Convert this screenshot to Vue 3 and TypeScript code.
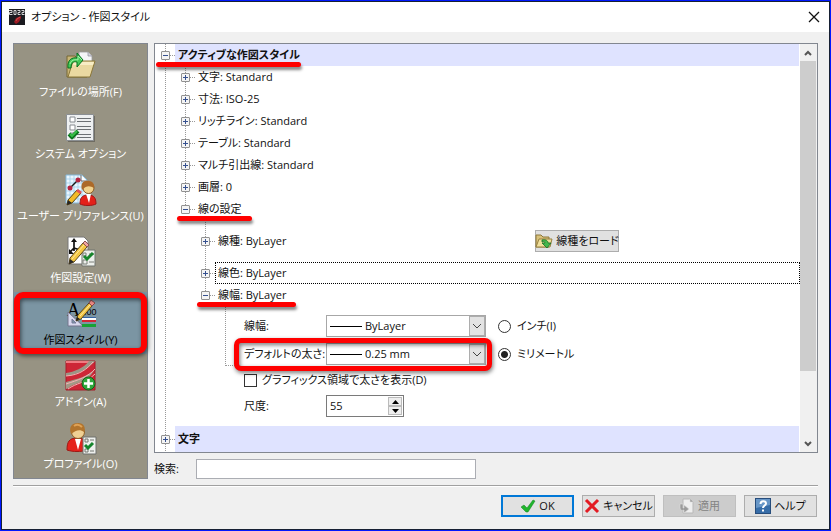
<script setup lang="ts">
import { ref } from 'vue'

type IconName = 'folder' | 'system' | 'user' | 'drafting' | 'style' | 'addin' | 'profile'

interface Page {
  icon: IconName
  label: string
}

const pages: Page[] = [
  { icon: 'folder', label: 'ファイルの場所(F)' },
  { icon: 'system', label: 'システム オプション' },
  { icon: 'user', label: 'ユーザー プリファレンス(U)' },
  { icon: 'drafting', label: '作図設定(W)' },
  { icon: 'style', label: '作図スタイル(Y)' },
  { icon: 'addin', label: 'アドイン(A)' },
  { icon: 'profile', label: 'プロファイル(O)' },
]

const styles: string[] = [
  '文字: Standard',
  '寸法: ISO-25',
  'リッチライン: Standard',
  'テーブル: Standard',
  'マルチ引出線: Standard',
  '画層: 0',
]

const current = ref<IconName>('style')
const lineWeight = ref('ByLayer')
const defaultWeight = ref('0.25 mm')
const unit = ref('mm')
const showWeight = ref(false)
const scale = ref('55')
const query = ref('')

function step(by: number): void {
  scale.value = String(Number(scale.value) + by)
}
</script>

<template>
  <div class="dialog">
    <header class="titlebar">
      <svg class="app-icon" width="16" height="16" viewBox="0 0 16 16">
        <rect width="16" height="16" fill="#1b1b20" />
        <path d="M0 1.500h3v2H.500v2H3.500M5 1.500h2v4H5zM8.500 1.500h2.500v2H9v2h2.500M12.500 1.500h2.500v2h-2v2h2.500" fill="none" stroke="#e8e8e8" stroke-width=".9" />
        <path d="M12 7 7 9l-2 4 2 2 3-2 2-4z" fill="#9c1c24" />
        <path d="m11 8-3 2-1 2" fill="none" stroke="#d44b4b" />
      </svg>
      <h1>オプション - 作図スタイル</h1>
      <button class="close" type="button" aria-label="閉じる">
        <svg width="12" height="12" viewBox="0 0 12 12"><path d="m1 1 10 10M11 1 1 11" stroke="#111" stroke-width="1.300" /></svg>
      </button>
    </header>

    <main class="body">
      <nav class="sidebar">
        <button
          v-for="page in pages"
          :key="page.icon"
          type="button"
          class="page"
          :class="{ active: page.icon === current }"
          @click="current = page.icon"
        >
          <svg width="32" height="32" viewBox="0 0 32 32">
            <g v-if="page.icon === 'folder'">
              <path d="M2 6h8l2 2h10v19H2z" fill="#c9b577" stroke="#756632" />
              <path d="M14 2h9l4 4v10H14z" fill="#f5f5f8" stroke="#999" stroke-width=".8" />
              <path d="M23 2v4h4" fill="#d5d5df" stroke="#8d8d99" stroke-width=".7" />
              <path d="M8 11h22l-5 16H3z" fill="#ead9a1" stroke="#8a7638" />
              <path d="M9 12h20l-1 3H8z" fill="#f8edc5" />
              <path d="M3 18C2 10 7 7 12 8V3l6 7-6 7v-5c-4-1-6 1-6 6z" fill="#45c957" stroke="#087020" />
              <path d="M5 14c1-4 5-5 8-4V6l4 4" fill="none" stroke="#a0f3a7" />
            </g>
            <g v-else-if="page.icon === 'system'">
              <path d="M3 4h27v26H3z" fill="#6f6c62" />
              <path d="M1.500 2.500h27v26h-27z" fill="#eef0f1" stroke="#8b8f93" />
              <path d="M5 5h5v5H5zM5 13h5v5H5zM5 21h5v5H5z" fill="#fff" stroke="#868b90" />
              <path d="M12 6.500h14M12 9.500h14M12 14.500h14M12 17.500h14M12 22.500h14M12 25.500h14" stroke="#6c7074" />
              <path d="m4 22 3 3 6-6" fill="none" stroke="#08751b" stroke-width="4" />
              <path d="m5 22 2 2 5-5" fill="none" stroke="#38bd48" stroke-width="2" />
            </g>
            <g v-else-if="page.icon === 'user'">
              <path d="M1 1h16l5 5v23H1z" fill="#e9f6ff" stroke="#83b7d8" />
              <path d="M5 1v28M9 1v28M13 1v28M17 1v28M1 5h20M1 9h20M1 13h20M1 17h20M1 21h20M1 25h20" stroke="#98c9e7" stroke-width=".7" />
              <path d="M16 1v6h6" fill="#fff" stroke="#666" />
              <path d="m5 14 8-8" stroke="#181818" stroke-width="1.500" />
              <circle cx="5" cy="14" r="2.500" fill="#b52440" /><circle cx="13" cy="6" r="2.500" fill="#b52440" />
              <path d="M15 30c0-6 2-9 8-9s8 3 8 9c-4 2-12 2-16 0" fill="#e32119" stroke="#9c1818" />
              <path d="m21 20 3 9 2-9" fill="#fff" />
              <circle cx="23.500" cy="14" r="5.500" fill="#f2d28c" stroke="#8d5d25" />
              <path d="M17 16c-2-7 2-10 7-9 4 0 6 4 5 7-4-2-7-3-12 2" fill="#ac6928" />
              <path d="m3 26 9-10 4 3-9 10-5 2z" fill="#f2bb29" stroke="#5b4716" />
              <path d="m11 17 2-2 4 3-2 2z" fill="#e15257" /><path d="m3 26 4 3-5 2z" fill="#252525" />
            </g>
            <g v-else-if="page.icon === 'drafting'">
              <path d="M3 1h16l4 4v23H3z" fill="#fff" stroke="#777" />
              <path d="M9 15V5M9 12l9 3M9 12l-4 4" fill="none" stroke="#111" stroke-width="1.700" />
              <path d="m6 6 3-4 3 4zM16 12l4 4-6 1zM4 13v5h5z" fill="#111" />
              <path d="M17 14h13v16H17z" fill="#ecefeb" stroke="#71746e" />
              <path d="M18 24h4v4h-4zM24 26h5M18 17h3v3h-3zM24 18h5" fill="none" stroke="#7b7e79" />
              <path d="m19 20 3 3 6-6" fill="none" stroke="#16852b" stroke-width="3" />
              <path d="m5 22 13-15 4 4L9 26l-5 2z" fill="#f4c742" stroke="#5c4717" />
              <path d="m18 7 2-2 4 4-2 2z" fill="#f1a6a3" stroke="#8b5353" /><path d="m5 23 4 3-5 2z" fill="#282828" />
              <path d="m7 23 12-14" stroke="#ffe99c" />
            </g>
            <g v-else-if="page.icon === 'style'">
              <text x="2" y="18" class="icon-letter">A</text>
              <text x="19" y="17" class="icon-digits">.00</text>
              <path d="M3 14v14h15z" fill="#d8d8ed" stroke="#74758d" /><path d="M7 21v4h4z" fill="#7b95a3" stroke="#777b9b" />
              <path d="M17 19h14v3H17z" fill="#3464a5" /><path d="M17 20h14v3H17z" fill="#fff" /><path d="M17 22h14v2H17z" fill="#d62435" />
              <path d="M17 26h14v3H17z" fill="#18a235" />
              <path d="m13 17 11-12 3 3-11 13-5 2z" fill="#f0c442" stroke="#594719" />
              <path d="m24 5 2-3 4 3-3 3z" fill="#f08b86" stroke="#884a4a" /><path d="m12 19 3 2-4 2z" fill="#222" />
              <path d="M15 18 25 7" stroke="#ffeaa0" />
            </g>
            <g v-else-if="page.icon === 'addin'">
              <path d="M1 1h29v29H1z" fill="#cd2636" stroke="#a41c2a" />
              <path d="M1 1h28v2H1z" fill="#ef7b82" />
              <path d="M1 16C12 15 23 9 30 1h-6C19 8 9 12 1 13z" fill="#9c9686" />
              <path d="M1 22c10-3 22-5 29-13-7 11-9 11-19 15S7 27 1 29z" fill="#a39986" />
              <path d="M1 16C15 15 22 9 28 2M1 24c12-4 22-7 29-15M3 29c8-6 18-6 27-15" fill="none" stroke="#f3b3b5" />
              <circle cx="23.500" cy="23.500" r="6.500" fill="#2fa83b" stroke="#12641b" />
              <path d="M23.500 19v9M19 23.500h9" stroke="#fff" stroke-width="2.500" />
            </g>
            <g v-else>
              <path d="M2 28c0-8 2-12 10-12s10 4 10 12c-6 2-14 2-20 0" fill="#e5231c" stroke="#9d1914" />
              <path d="m10 17 3 11 3-11z" fill="#fff" />
              <circle cx="13" cy="10" r="6.500" fill="#efd094" stroke="#8f6127" />
              <path d="M6 12C3 4 8 1 13 1c6 0 8 5 6 9-4-3-8-2-13 2" fill="#b1742d" />
              <path d="M9 4c3-2 6-1 8 1" stroke="#dfa255" fill="none" stroke-width="2" />
              <path d="M18 15h13v17H18z" fill="#eef0ed" stroke="#6f716d" />
              <path d="M20 17h3v3h-3zM20 27h3v3h-3zM25 18h4M25 29h4" fill="none" stroke="#727671" />
              <path d="m20 23 3 3 5-5" fill="none" stroke="#15852d" stroke-width="3" />
            </g>
          </svg>
          <span>{{ page.label }}</span>
        </button>
      </nav>

      <section class="content">
        <div class="panel">
          <div class="tree">
            <div class="row heading marked">
              <span class="node"><button type="button" class="toggle minus" aria-label="折りたたむ"></button></span>
              <strong>アクティブな作図スタイル</strong>
            </div>
            <div v-for="item in styles" :key="item" class="row level-1">
              <span class="node line"><button type="button" class="toggle" aria-label="展開"></button></span>
              <span class="name">{{ item }}</span>
            </div>
            <div class="row level-1">
              <span class="node line end"><button type="button" class="toggle minus" aria-label="折りたたむ"></button></span>
              <span class="name marked">線の設定</span>
            </div>
            <div class="row level-2 tall">
              <span class="node line"><button type="button" class="toggle" aria-label="展開"></button></span>
              <span class="name">線種: ByLayer</span>
              <button type="button" class="button load">
                <svg width="18" height="16" viewBox="0 0 18 16">
                  <path d="M1 2h5l2 2h6v10H1z" fill="#d8c17b" stroke="#8d783a" />
                  <path d="M4 6h13l-2 8H1z" fill="#f1df9b" stroke="#978141" />
                  <path d="M7 7c4-1 6 1 6 3h3l-4 5-5-5h3c0-1-1-2-3-1z" fill="#45b84c" stroke="#176d24" stroke-width=".8" />
                </svg>
                <span>線種をロード</span>
              </button>
            </div>
            <div class="row level-2">
              <span class="node line"><button type="button" class="toggle" aria-label="展開"></button></span>
              <span class="name focused">線色: ByLayer</span>
            </div>
            <div class="row level-2">
              <span class="node line end"><button type="button" class="toggle minus" aria-label="折りたたむ"></button></span>
              <span class="name marked">線幅: ByLayer</span>
            </div>
            <div class="settings">
              <label for="weight">線幅:</label>
              <div class="combo">
                <select id="weight" v-model="lineWeight"><option>ByLayer</option></select>
                <svg width="16" height="20" viewBox="0 0 16 20"><path d="m4 8 4 4 4-4" fill="none" stroke="#444" /></svg>
              </div>
              <label class="radio"><input v-model="unit" type="radio" name="unit" value="inch" />インチ(I)</label>

              <label for="default-weight">デフォルトの太さ:</label>
              <div class="combo">
                <select id="default-weight" v-model="defaultWeight"><option>0.25 mm</option></select>
                <svg width="16" height="20" viewBox="0 0 16 20"><path d="m4 8 4 4 4-4" fill="none" stroke="#444" /></svg>
              </div>
              <label class="radio"><input v-model="unit" type="radio" name="unit" value="mm" />ミリメートル</label>

              <label class="check"><input v-model="showWeight" type="checkbox" />グラフィックス領域で太さを表示(D)</label>

              <label for="scale">尺度:</label>
              <div class="spinner">
                <input id="scale" v-model="scale" type="text" />
                <span class="steps">
                  <button type="button" aria-label="増やす" @click="step(1)"><svg width="7" height="4" viewBox="0 0 7 4"><path d="M0 4h7L3.500 0z" /></svg></button>
                  <button type="button" aria-label="減らす" @click="step(-1)"><svg width="7" height="4" viewBox="0 0 7 4"><path d="M0 0h7L3.500 4z" /></svg></button>
                </span>
              </div>
            </div>
            <div class="row heading last">
              <span class="node"><button type="button" class="toggle" aria-label="展開"></button></span>
              <strong>文字</strong>
            </div>
          </div>
          <div class="scrollbar">
            <button type="button" aria-label="上へ"><svg width="8" height="6" viewBox="0 0 8 6"><path d="m1 5 3-3 3 3" /></svg></button>
            <div class="track"><div class="thumb"></div></div>
            <button type="button" aria-label="下へ"><svg width="8" height="6" viewBox="0 0 8 6"><path d="m1 1 3 3 3-3" /></svg></button>
          </div>
        </div>
        <div class="search">
          <label for="search">検索:</label>
          <input id="search" v-model="query" type="text" />
        </div>
      </section>
    </main>

    <footer class="actions">
      <button type="button" class="button primary">
        <svg width="16" height="14" viewBox="0 0 16 14"><path d="m1 8 3-2 3 3 6-8 2 1-7 11H6z" fill="#20b52c" stroke="#118020" stroke-width=".5" /></svg>
        <span>OK</span>
      </button>
      <button type="button" class="button">
        <svg width="16" height="16" viewBox="0 0 16 16"><path d="m2 2 12 12M14 2 2 14" stroke="#e31b23" stroke-width="3" /></svg>
        <span>キャンセル</span>
      </button>
      <button type="button" class="button" disabled>
        <svg width="16" height="16" viewBox="0 0 16 16">
          <path d="M4 1h7l3 3v11H4z" fill="#eee" stroke="#b8b8b8" />
          <path d="M11 1v3h3M1 6v4c0 2 2 3 4 2v3l5-4-5-4v3H4V6z" fill="#9b9b9b" stroke="#ddd" stroke-width=".6" />
        </svg>
        <span>適用</span>
      </button>
      <button type="button" class="button">
        <svg width="16" height="16" viewBox="0 0 16 16">
          <rect x=".5" y=".5" width="15" height="15" fill="#376da8" stroke="#274d7c" />
          <path d="M1 1h14v6L1 10z" fill="#6796c7" />
          <path d="M5.500 6c0-4 5.500-3.500 5.500-.5C11 7.500 8 7.500 8 10" fill="none" stroke="#fff" stroke-width="2" /><path d="M7 11.500h2v2H7z" fill="#fff" />
        </svg>
        <span>ヘルプ</span>
      </button>
    </footer>
  </div>
</template>

<style>
body {
  margin: 0;
}
</style>

<style scoped>
*,
*::before,
*::after {
  box-sizing: border-box;
}

.dialog {
  display: flex;
  flex-direction: column;
  min-height: 100vh;
  border: 1px solid #0018ff;
  outline: 1px solid #172033;
  outline-offset: -2px;
  background: #f0f0f0;
  color: #111;
  font: 11px/16px "Open Sans", "Noto Sans CJK JP", sans-serif;
  font-feature-settings: "palt";
}

button,
input,
select {
  margin: 0;
  padding: 0;
  border: 0;
  border-radius: 0;
  background: none;
  color: inherit;
  font: inherit;
  font-feature-settings: inherit;
}

svg {
  display: block;
  flex: none;
}

.titlebar {
  display: flex;
  align-items: center;
  gap: 6px;
  height: 31px;
  padding: 0 8px;
  background: #fff;
}

h1 {
  flex: 1;
  margin: 0;
  font-size: 11px;
  font-weight: 400;
}

.close {
  padding: 2px;
}

.body {
  display: flex;
  flex: 1;
  gap: 6px;
  margin: 0 12px;
  padding: 11px 0 6px;
  border-bottom: 1px solid #a0a0a0;
  box-shadow: 0 1px #fff;
}

.sidebar {
  display: flex;
  flex-direction: column;
  width: 135px;
  border: 1px solid #828790;
  background: #979383;
}

.page {
  position: relative;
  display: flex;
  flex-direction: column;
  align-items: center;
  gap: 2px;
  height: 62px;
  padding: 6px 0;
  color: #fff;
}

.page svg {
  overflow: visible;
}

.page.active {
  background: #7b95a3;
  color: #000;
}

.page.active::after {
  content: "";
  position: absolute;
  inset: 0;
  border: 6px solid #f00;
  border-radius: 9px;
  filter: drop-shadow(1px 2px 2px #0008);
}

.icon-letter {
  font: 18px "Liberation Serif", serif;
}

.icon-digits {
  font: 9px "Liberation Sans", sans-serif;
}

.content {
  display: flex;
  flex: 1;
  flex-direction: column;
  min-width: 0;
}

.panel {
  display: flex;
  flex: 1;
  border: 1px solid #828790;
  background: #fff;
}

.tree {
  display: flex;
  flex: 1;
  flex-direction: column;
  min-width: 0;
  background: linear-gradient(#999 1px, transparent 1px) 10px 0 / 1px 2px repeat-y;
}

.row {
  display: flex;
  height: 22px;
}

.level-1 {
  padding-left: 20px;
}

.level-2 {
  padding-left: 40px;
}

.tall {
  height: 42px;
}

.node {
  position: relative;
  display: flex;
  flex: none;
  align-items: center;
  justify-content: center;
  width: 20px;
}

.node::after {
  content: "";
  position: absolute;
  top: 50%;
  right: 0;
  width: 5px;
  border-top: 1px dotted #999;
}

.line::before {
  content: "";
  position: absolute;
  top: 0;
  bottom: 0;
  left: 10px;
  width: 1px;
  background: linear-gradient(#999 1px, transparent 1px) 0 0 / 1px 2px;
}

.line.end::before {
  bottom: 50%;
}

.toggle {
  position: relative;
  width: 9px;
  height: 9px;
  border: 1px solid #919191;
  border-radius: 1px;
  background:
    linear-gradient(#35508f, #35508f) center / 5px 1px no-repeat,
    linear-gradient(#35508f, #35508f) center / 1px 5px no-repeat,
    #f4f4f4;
}

.toggle.minus {
  background: linear-gradient(#35508f, #35508f) center / 5px 1px no-repeat, #f4f4f4;
}

.name,
strong {
  display: flex;
  align-items: center;
  padding: 0 3px;
}

.name {
  position: relative;
}

.heading {
  position: relative;
}

.heading strong {
  flex: 1;
  margin-right: 1px;
  background: #dfe3ff;
}

.heading.last {
  flex: 1 0 24px;
}

.focused {
  flex: 1;
  padding: 0 2px;
  border: 1px dotted #000;
}

.marked::after {
  content: "";
  position: absolute;
  z-index: 1;
  right: -7px;
  bottom: -1px;
  left: -18px;
  height: 5px;
  border-radius: 3px;
  background: #f00;
  box-shadow: 1px 3px 3px #0007;
}

.heading.marked::after {
  right: auto;
  left: 1px;
  width: 145px;
}

.button {
  display: flex;
  align-items: center;
  justify-content: center;
  gap: 3px;
  width: 73px;
  height: 22px;
  border: 1px solid #adadad;
  background: #e1e1e1;
  white-space: nowrap;
}

.load {
  align-self: center;
  width: 84px;
  margin: 0 181px 0 auto;
}

.settings {
  position: relative;
  display: grid;
  grid-template-columns: 82px 160px 1fr;
  grid-template-rows: 22px 22px 18px 22px;
  align-items: center;
  row-gap: 6px;
  padding: 9px 0 9px 89px;
}

.settings::before {
  content: "";
  position: absolute;
  top: 0;
  left: 70px;
  width: 10px;
  height: 60px;
  border: dotted #999;
  border-width: 0 0 1px 1px;
}

.settings label {
  white-space: nowrap;
}

.combo {
  position: relative;
  display: flex;
}

select {
  appearance: none;
  width: 100%;
  height: 22px;
  padding: 0 20px 0 38px;
  border: 1px solid #a7a7a7;
  background: linear-gradient(#000, #000) 3px 10px / 32px 1px no-repeat, #fff;
}

.combo svg {
  position: absolute;
  top: 1px;
  right: 1px;
  background: #e3e3e3;
  outline: 1px solid #adadad;
  outline-offset: -1px;
  pointer-events: none;
}

label[for="default-weight"]::after {
  content: "";
  position: absolute;
  z-index: 1;
  top: 32px;
  left: 79px;
  width: 258px;
  height: 33px;
  border: 5px solid #f00;
  border-radius: 7px;
  filter: drop-shadow(1px 2px 2px #0008);
  pointer-events: none;
}

.radio,
.check {
  display: flex;
  align-items: center;
  gap: 6px;
}

.radio {
  padding-left: 12px;
}

.check {
  grid-column: 1 / -1;
  gap: 5px;
}

.radio input,
.check input {
  appearance: none;
  width: 13px;
  height: 13px;
  border: 1px solid #333;
  background: #fff;
}

.radio input {
  border-radius: 50%;
}

.radio input:checked {
  background: radial-gradient(circle, #222 3px, #fff 4px);
}

.check input:checked {
  background: #333;
}

.spinner {
  display: flex;
  width: 78px;
  height: 22px;
  padding: 1px;
  border: 1px solid #7a7a7a;
  background: #fff;
}

.spinner input {
  flex: 1;
  min-width: 0;
  padding-left: 2px;
}

.steps {
  display: flex;
  flex-direction: column;
  width: 14px;
}

.steps button {
  display: flex;
  flex: 1;
  align-items: center;
  justify-content: center;
  border: 1px solid #bbb;
  background: #eee;
}

.scrollbar {
  display: flex;
  flex-direction: column;
  width: 17px;
  padding-right: 1px;
  background: #f0f0f0;
}

.scrollbar button {
  display: flex;
  align-items: center;
  justify-content: center;
  height: 17px;
}

.scrollbar path {
  fill: none;
  stroke: #555;
  stroke-width: 2;
}

.track {
  flex: 1;
}

.thumb {
  height: 83%;
  background: #cdcdcd;
}

.search {
  display: flex;
  align-items: center;
  gap: 15px;
  padding-top: 6px;
}

.search label {
  width: 27px;
}

.search input {
  width: 280px;
  height: 20px;
  padding: 0 4px;
  border: 1px solid #abadb3;
  background: #fff;
}

.actions {
  display: flex;
  justify-content: flex-end;
  gap: 8px;
  padding: 9px 13px 13px;
}

.primary {
  border: 2px solid #0078d7;
}

.button:disabled {
  border-color: #bfbfbf;
  background: #ccc;
  color: #838383;
}
</style>
